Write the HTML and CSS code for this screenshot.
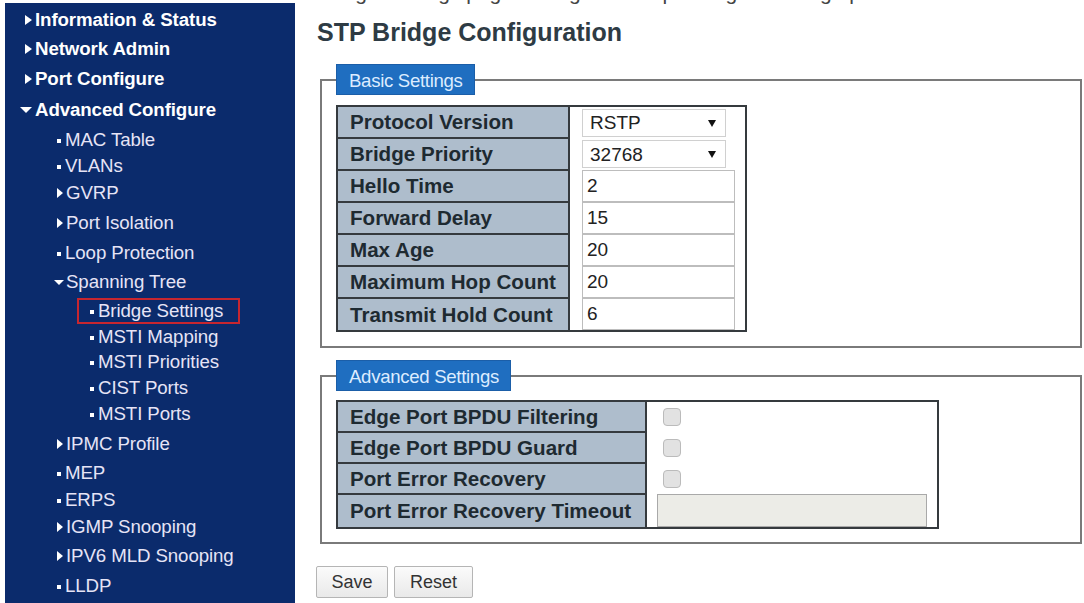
FILE: index.html
```html
<!DOCTYPE html>
<html lang="en">
<head>
<meta charset="utf-8">
<title>STP Bridge Configuration</title>
<link rel="stylesheet" href="styles.css">
</head>
<body>
<div class="page">
  <nav class="sidebar">
    <div class="item l1 h28"><span class="arr-r"></span>Information &amp; Status</div>
    <div class="item l1 h29"><span class="arr-r"></span>Network Admin</div>
    <div class="item l1 h31"><span class="arr-r"></span>Port Configure</div>
    <div class="item l1 h32"><span class="arr-d"></span>Advanced Configure</div>
    <div class="item l2 h27"><span class="bullet"></span>MAC Table</div>
    <div class="item l2 h25"><span class="bullet"></span>VLANs</div>
    <div class="item l2 h29"><span class="arr-r2"></span>GVRP</div>
    <div class="item l2 h31"><span class="arr-r2"></span>Port Isolation</div>
    <div class="item l2 h29"><span class="bullet"></span>Loop Protection</div>
    <div class="item l2 h30"><span class="arr-d2"></span>Spanning Tree</div>
    <div class="item l3sel h28"><span class="selbox"><span class="bullet"></span>Bridge Settings</span></div>
    <div class="item l3 h24"><span class="bullet"></span>MSTI Mapping</div>
    <div class="item l3 h26"><span class="bullet"></span>MSTI Priorities</div>
    <div class="item l3 h25"><span class="bullet"></span>CIST Ports</div>
    <div class="item l3 h28"><span class="bullet"></span>MSTI Ports</div>
    <div class="item l2 h31"><span class="arr-r2"></span>IPMC Profile</div>
    <div class="item l2 h28"><span class="bullet"></span>MEP</div>
    <div class="item l2 h26"><span class="bullet"></span>ERPS</div>
    <div class="item l2 h28"><span class="arr-r2"></span>IGMP Snooping</div>
    <div class="item l2 h30"><span class="arr-r2"></span>IPV6 MLD Snooping</div>
    <div class="item l2 h30"><span class="bullet"></span>LLDP</div>
  </nav>

  <main class="main">
    <div class="caption"><div class="caption-text">Bridge Settings page: configure the spanning tree bridge parameters</div></div>
    <h1 class="title">STP Bridge Configuration</h1>

    <fieldset class="box basic">
      <legend class="legend">Basic Settings</legend>
      <table class="cfg cfg-basic">
        <tr><td class="lbl">Protocol Version</td><td class="val"><span class="sel"><select><option>RSTP</option></select></span></td></tr>
        <tr><td class="lbl">Bridge Priority</td><td class="val"><span class="sel"><select><option>32768</option></select></span></td></tr>
        <tr><td class="lbl">Hello Time</td><td class="val"><input class="txt" type="text" value="2"></td></tr>
        <tr><td class="lbl">Forward Delay</td><td class="val"><input class="txt" type="text" value="15"></td></tr>
        <tr><td class="lbl">Max Age</td><td class="val"><input class="txt" type="text" value="20"></td></tr>
        <tr><td class="lbl">Maximum Hop Count</td><td class="val"><input class="txt" type="text" value="20"></td></tr>
        <tr><td class="lbl">Transmit Hold Count</td><td class="val"><input class="txt" type="text" value="6"></td></tr>
      </table>
    </fieldset>

    <fieldset class="box advanced">
      <legend class="legend">Advanced Settings</legend>
      <table class="cfg cfg-adv">
        <tr><td class="lbl">Edge Port BPDU Filtering</td><td class="val2"><input class="chk" type="checkbox"></td></tr>
        <tr><td class="lbl">Edge Port BPDU Guard</td><td class="val2"><input class="chk" type="checkbox"></td></tr>
        <tr><td class="lbl">Port Error Recovery</td><td class="val2"><input class="chk" type="checkbox"></td></tr>
        <tr><td class="lbl">Port Error Recovery Timeout</td><td class="val3"><input class="txt disabled" type="text" disabled></td></tr>
      </table>
    </fieldset>

    <div class="buttons">
      <button class="btn btn-save" type="button">Save</button>
      <button class="btn btn-reset" type="button">Reset</button>
    </div>
  </main>
</div>
</body>
</html>
```

FILE: styles.css
```css
html, body {
  margin: 0;
  padding: 0;
  background: #ffffff;
  font-family: "Liberation Sans", Arial, sans-serif;
}

.page {
  display: flex;
  height: 603px;
  overflow: hidden;
}

/* ---------- Sidebar ---------- */
.sidebar {
  width: 290px;
  margin-left: 5px;
  margin-top: 3px;
  padding-top: 3px;
  background: #0b2b6c;
  box-sizing: border-box;
  flex: none;
}

.item {
  display: flex;
  align-items: center;
  white-space: nowrap;
  color: #e6e4f6;
  font-size: 18.7px;
  letter-spacing: -0.1px;
}

.h24 { height: 24px; }
.h25 { height: 25px; }
.h26 { height: 26px; }
.h27 { height: 27px; }
.h28 { height: 28px; }
.h29 { height: 29px; }
.h30 { height: 30px; }
.h31 { height: 31px; }
.h32 { height: 32px; }

.l1 {
  padding-left: 20px;
  font-weight: bold;
  color: #ffffff;
}

.l2 { padding-left: 52px; }
.l3 { padding-left: 85px; }
.l3sel { padding-left: 72px; }

.selbox {
  display: flex;
  align-items: center;
  height: 26px;
  box-sizing: border-box;
  border: 2px solid #c6262f;
  padding: 0 8px 0 11px;
  width: 163px;
}

.arr-r {
  width: 0;
  height: 0;
  border-left: 7px solid #ffffff;
  border-top: 5px solid transparent;
  border-bottom: 5px solid transparent;
  margin-right: 3px;
}

.arr-d {
  width: 0;
  height: 0;
  border-top: 6px solid #ffffff;
  border-left: 6px solid transparent;
  border-right: 6px solid transparent;
  margin-left: -5px;
  margin-right: 3px;
}

.arr-r2 {
  width: 0;
  height: 0;
  border-left: 6px solid #ffffff;
  border-top: 5px solid transparent;
  border-bottom: 5px solid transparent;
  margin-right: 3px;
}

.arr-d2 {
  width: 0;
  height: 0;
  border-top: 5px solid #ffffff;
  border-left: 5px solid transparent;
  border-right: 5px solid transparent;
  margin-left: -3px;
  margin-right: 2px;
}

.bullet {
  width: 4px;
  height: 4px;
  background: #ffffff;
  margin-right: 4px;
  margin-top: 2px;
  flex: none;
}

/* ---------- Main ---------- */
.main {
  flex: 1;
  padding-left: 21px;
  min-width: 0;
}

.caption {
  height: 5px;
  overflow: hidden;
}

.caption-text {
  font-size: 21px;
  line-height: 24px;
  margin-top: -19px;
  margin-left: 2px;
  color: #444;
  white-space: nowrap;
}

.title {
  margin: 12px 0 0 1px;
  font-size: 25px;
  line-height: 31px;
  font-weight: bold;
  color: #2e3b44;
}

.box {
  margin: 16px 2px 0 4px;
  border: 2px solid #7a7a7a;
  padding: 10px 14px 14px 14px;
  box-sizing: border-box;
  min-width: 0;
}

.advanced {
  margin-top: 12px;
  padding-top: 9px;
  padding-bottom: 13px;
}

.legend {
  background: #1f6ec0;
  color: #dcecff;
  font-size: 18.6px;
  letter-spacing: -0.3px;
  height: 31px;
  line-height: 31px;
  padding: 0 11px 0 12px;
  box-sizing: border-box;
  border: 1px solid #1b5ea8;
}

.cfg {
  border-collapse: collapse;
  border: 2px solid #353a3e;
}

.cfg-basic { width: 411px; }
.cfg-adv { width: 603px; }

.lbl {
  background: #aebdcc;
  border: 2px solid #353a3e;
  color: #1e2a31;
  font-weight: bold;
  font-size: 20.6px;
  padding: 0 0 0 12px;
  white-space: nowrap;
}

.cfg-basic .lbl { width: 219px; height: 30px; }
.cfg-adv .lbl { width: 295px; height: 29px; }

.val {
  padding: 0 10px 0 12px;
  background: #fff;
}

.val2 {
  padding: 0 0 0 16px;
  background: #fff;
}

.val3 {
  padding: 0 10px 0 10px;
  background: #fff;
}

.txt {
  display: block;
  width: 153px;
  height: 32px;
  box-sizing: border-box;
  border: 1px solid #bdbdbd;
  font-family: "Liberation Sans", Arial, sans-serif;
  font-size: 19px;
  color: #222;
  padding: 0 4px;
  margin: 0;
  background: #fff;
  outline: none;
}

.txt.disabled {
  width: 270px;
  height: 33px;
  background: #ecece7;
  border: 1px solid #a9a9a9;
}

.sel {
  position: relative;
  display: block;
  width: 144px;
  height: 28px;
}

.sel select {
  appearance: none;
  -webkit-appearance: none;
  width: 144px;
  height: 28px;
  box-sizing: border-box;
  border: 1px solid #d0d0d0;
  background: #fff;
  font-family: "Liberation Sans", Arial, sans-serif;
  font-size: 19px;
  color: #222;
  padding: 0 0 0 7px;
  margin: 0;
  border-radius: 0;
  outline: none;
}

.sel::after {
  content: "";
  position: absolute;
  right: 10px;
  top: 11px;
  border-top: 7px solid #111;
  border-left: 4px solid transparent;
  border-right: 4px solid transparent;
}

.chk {
  appearance: none;
  -webkit-appearance: none;
  display: block;
  width: 18px;
  height: 18px;
  margin: 0;
  border: 1px solid #bbbbbb;
  border-radius: 4px;
  background: #e2e2e2;
  box-sizing: border-box;
}

.buttons {
  display: flex;
  gap: 6px;
  margin-top: 22px;
}

.btn {
  height: 32px;
  box-sizing: border-box;
  border: 1px solid #b5b5b5;
  border-radius: 2px;
  background: linear-gradient(#fbfbfb, #e9e9e9);
  font-family: "Liberation Sans", Arial, sans-serif;
  font-size: 18px;
  color: #333;
  padding: 0;
}

.btn-save { width: 72px; }
.btn-reset { width: 79px; }
```
